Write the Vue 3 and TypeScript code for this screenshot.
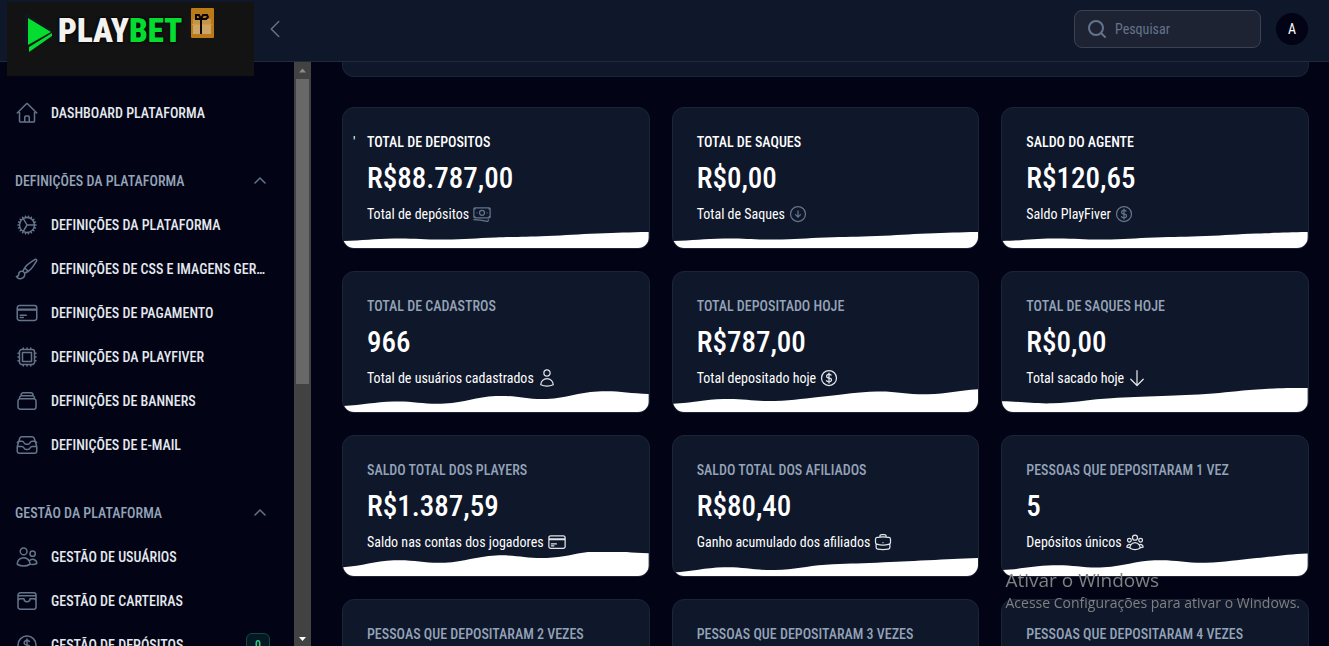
<script setup lang="ts">
type IconName =
  | 'home' | 'cog' | 'brush' | 'card' | 'chip' | 'stack' | 'inbox' | 'users' | 'wallet'
  | 'dollar' | 'banknotes' | 'downCircle' | 'user' | 'arrowDown' | 'briefcase' | 'group'

interface NavItem { label: string; icon: IconName; badge?: string }
interface NavGroup { title?: string; items: NavItem[] }
interface Stat {
  label: string
  value: string
  note: string
  icon: IconName
  chart: number[]
  top?: boolean
  mark?: string
}

const icons: Record<IconName, string> = {
  home: 'M2.25 12l8.954-8.955c.44-.439 1.152-.439 1.591 0L21.75 12M4.5 9.75v10.125c0 .621.504 1.125 1.125 1.125H9.75v-4.875c0-.621.504-1.125 1.125-1.125h2.25c.621 0 1.125.504 1.125 1.125V21h4.125c.621 0 1.125-.504 1.125-1.125V9.75M8.25 21h8.25',
  cog: 'M4.5 12a7.5 7.5 0 0 0 15 0m-15 0a7.5 7.5 0 1 1 15 0m-15 0H3m16.5 0H21m-1.5 0H12m-8.457 3.077 1.41-.513m14.095-5.13 1.41-.513M5.106 17.785l1.15-.964m11.49-9.642 1.149-.964M7.501 19.795l.75-1.3m7.5-12.99.75-1.3m-6.063 16.658.26-1.477m2.605-14.772.26-1.477m0 17.726-.26-1.477M10.698 4.614l-.26-1.477M16.5 19.794l-.75-1.299M7.5 4.205 12 12m6.894 5.785-1.149-.964M6.256 7.178l-1.15-.964m15.352 8.864-1.41-.513M4.954 9.435l-1.41-.514M12.002 12l-3.75 6.495',
  brush: 'M9.53 16.122a3 3 0 0 0-5.78 1.128 2.25 2.25 0 0 1-2.4 2.245 4.5 4.5 0 0 0 8.4-2.245c0-.399-.078-.78-.22-1.128Zm0 0a15.998 15.998 0 0 0 3.388-1.62m-5.043-.025a15.994 15.994 0 0 1 1.622-3.395m3.42 3.42a15.995 15.995 0 0 0 4.764-4.648l3.876-5.814a1.151 1.151 0 0 0-1.597-1.597L14.146 6.32a15.996 15.996 0 0 0-4.649 4.763m3.42 3.42a6.776 6.776 0 0 0-3.42-3.42',
  card: 'M2.25 8.25h19.5M2.25 9h19.5m-16.5 5.25h6m-6 2.25h3m-3.75 3h15a2.25 2.25 0 0 0 2.25-2.25V6.75A2.25 2.25 0 0 0 19.5 4.5h-15a2.25 2.25 0 0 0-2.25 2.25v10.5A2.25 2.25 0 0 0 4.5 19.5Z',
  chip: 'M8.25 3v1.5M4.5 8.25H3m18 0h-1.5M4.5 12H3m18 0h-1.5m-15 3.75H3m18 0h-1.5M8.25 19.5V21M12 3v1.5m0 15V21m3.75-18v1.5m0 15V21m-9-1.5h10.5a2.25 2.25 0 0 0 2.25-2.25V6.75a2.25 2.25 0 0 0-2.25-2.25H6.75A2.25 2.25 0 0 0 4.5 6.75v10.5a2.25 2.25 0 0 0 2.25 2.25Zm.75-12h9v9h-9v-9Z',
  stack: 'M6 6.878V6a2.25 2.25 0 0 1 2.25-2.25h7.5A2.25 2.25 0 0 1 18 6v.878m-12 0c.235-.083.487-.128.75-.128h10.5c.263 0 .515.045.75.128m-12 0A2.25 2.25 0 0 0 4.5 9v.878m13.5-3A2.25 2.25 0 0 1 19.5 9v.878m0 0a2.246 2.246 0 0 0-.75-.128H5.25c-.263 0-.515.045-.75.128m15 0A2.25 2.25 0 0 1 21 12v6a2.25 2.25 0 0 1-2.25 2.25H5.25A2.25 2.25 0 0 1 3 18v-6c0-.98.626-1.813 1.5-2.122',
  inbox: 'M9 3.75H6.912a2.25 2.25 0 0 0-2.15 1.588L2.35 13.177a2.25 2.25 0 0 0-.1.661V18a2.25 2.25 0 0 0 2.25 2.25h15A2.25 2.25 0 0 0 21.75 18v-4.162c0-.224-.034-.447-.1-.661L19.24 5.338a2.25 2.25 0 0 0-2.15-1.588H9M2.3 9.5c.5-.9 1.2-1.25 2.2-1.25h2.36a2.25 2.25 0 0 1 2.012 1.244l.256.512a2.25 2.25 0 0 0 2.013 1.244h1.718a2.25 2.25 0 0 0 2.013-1.244l.256-.512a2.25 2.25 0 0 1 2.013-1.244H19.5c1 0 1.7.35 2.2 1.25M2.3 13.5h4.56c.85 0 1.6.48 2.012 1.244l.256.512c.38.76 1.16 1.244 2.013 1.244h1.718c.85 0 1.63-.48 2.013-1.244l.256-.512c.38-.76 1.16-1.244 2.013-1.244h4.56',
  users: 'M15 19.128a9.38 9.38 0 0 0 2.625.372 9.337 9.337 0 0 0 4.121-.952 4.125 4.125 0 0 0-7.533-2.493M15 19.128v-.003c0-1.113-.285-2.16-.786-3.07M15 19.128v.106A12.318 12.318 0 0 1 8.624 21c-2.331 0-4.512-.645-6.374-1.766l-.001-.109a6.375 6.375 0 0 1 11.964-3.07M12 6.375a3.375 3.375 0 1 1-6.75 0 3.375 3.375 0 0 1 6.75 0Zm8.25 2.25a2.625 2.625 0 1 1-5.25 0 2.625 2.625 0 0 1 5.25 0Z',
  wallet: 'M21 8.25v9.75A2.25 2.25 0 0 1 18.75 20.25H5.25A2.25 2.25 0 0 1 3 18V6a2.25 2.25 0 0 1 2.25-2.25h13.5A2.25 2.25 0 0 1 21 6v6M3 6.75h18M3 12a2.25 2.25 0 0 1 2.25-2.25H9a3 3 0 1 0 6 0h3.75A2.25 2.25 0 0 1 21 12',
  dollar: 'M12 6v12m-3-2.818.879.659c1.171.879 3.07.879 4.242 0 1.172-.879 1.172-2.303 0-3.182C13.536 12.219 12.768 12 12 12c-.725 0-1.45-.22-2.003-.659-1.106-.879-1.106-2.303 0-3.182s2.9-.879 4.006 0l.415.33M21 12a9 9 0 1 1-18 0 9 9 0 0 1 18 0Z',
  banknotes: 'M2.25 18.75a60.07 60.07 0 0 1 15.797 2.101c.727.198 1.453-.342 1.453-1.096V18.75M3.75 4.5v.75A.75.75 0 0 1 3 6h-.75m0 0v-.375c0-.621.504-1.125 1.125-1.125H20.25M2.25 6v9m18-10.5v.75c0 .414.336.75.75.75h.75m-1.5-1.5h.375c.621 0 1.125.504 1.125 1.125v9.75c0 .621-.504 1.125-1.125 1.125h-.375m1.5-1.5H21a.75.75 0 0 0-.75.75v.75m0 0H3.75m0 0h-.375a1.125 1.125 0 0 1-1.125-1.125V15m1.5 1.5v-.75A.75.75 0 0 0 3 15h-.75M15 10.5a3 3 0 1 1-6 0 3 3 0 0 1 6 0Zm3 0h.008v.008H18V10.5Zm-12 0h.008v.008H6V10.5Z',
  downCircle: 'm9 12.75 3 3m0 0 3-3m-3 3v-7.5M21 12a9 9 0 1 1-18 0 9 9 0 0 1 18 0Z',
  user: 'M15.75 6a3.75 3.75 0 1 1-7.5 0 3.75 3.75 0 0 1 7.5 0ZM4.501 20.118a7.5 7.5 0 0 1 14.998 0A17.933 17.933 0 0 1 12 21.75c-2.676 0-5.216-.584-7.499-1.632Z',
  arrowDown: 'M19.5 13.5 12 21m0 0-7.5-7.5M12 21V3',
  briefcase: 'M20.25 14.15v4.25c0 1.094-.787 2.036-1.872 2.18-2.087.277-4.216.42-6.378.42s-4.291-.143-6.378-.42c-1.085-.144-1.872-1.086-1.872-2.18v-4.25m16.5 0a2.18 2.18 0 0 0 .75-1.661V8.706c0-1.081-.768-2.015-1.837-2.175a48.114 48.114 0 0 0-3.413-.387m4.5 8.006c-.194.165-.42.295-.673.38A23.978 23.978 0 0 1 12 15.75c-2.648 0-5.195-.429-7.577-1.22a2.016 2.016 0 0 1-.673-.38m0 0A2.18 2.18 0 0 1 3 12.489V8.706c0-1.081.768-2.015 1.837-2.175a48.111 48.111 0 0 1 3.413-.387m7.5 0V5.25A2.25 2.25 0 0 0 13.5 3h-3a2.25 2.25 0 0 0-2.25 2.25v.894m7.5 0a48.667 48.667 0 0 0-7.5 0M12 12.75h.008v.008H12v-.008Z',
  group: 'M18 18.72a9.094 9.094 0 0 0 3.741-.479 3 3 0 0 0-4.682-2.72m.94 3.198.001.031c0 .225-.012.447-.037.666A11.944 11.944 0 0 1 12 21c-2.17 0-4.207-.576-5.963-1.584A6.062 6.062 0 0 1 6 18.719m12 0a5.971 5.971 0 0 0-.941-3.197m0 0A5.995 5.995 0 0 0 12 12.75a5.995 5.995 0 0 0-5.058 2.772m0 0a3 3 0 0 0-4.681 2.72 8.986 8.986 0 0 0 3.74.477m.94-3.197a5.971 5.971 0 0 0-.94 3.197M15 6.75a3 3 0 1 1-6 0 3 3 0 0 1 6 0Zm6 3a2.25 2.25 0 1 1-4.5 0 2.25 2.25 0 0 1 4.5 0Zm-13.5 0a2.25 2.25 0 1 1-4.5 0 2.25 2.25 0 0 1 4.5 0Z'
}

const groups: NavGroup[] = [
  { items: [{ label: 'DASHBOARD PLATAFORMA', icon: 'home' }] },
  {
    title: 'DEFINIÇÕES DA PLATAFORMA',
    items: [
      { label: 'DEFINIÇÕES DA PLATAFORMA', icon: 'cog' },
      { label: 'DEFINIÇÕES DE CSS E IMAGENS GERAIS', icon: 'brush' },
      { label: 'DEFINIÇÕES DE PAGAMENTO', icon: 'card' },
      { label: 'DEFINIÇÕES DA PLAYFIVER', icon: 'chip' },
      { label: 'DEFINIÇÕES DE BANNERS', icon: 'stack' },
      { label: 'DEFINIÇÕES DE E-MAIL', icon: 'inbox' }
    ]
  },
  {
    title: 'GESTÃO DA PLATAFORMA',
    items: [
      { label: 'GESTÃO DE USUÁRIOS', icon: 'users' },
      { label: 'GESTÃO DE CARTEIRAS', icon: 'wallet' },
      { label: 'GESTÃO DE DEPÓSITOS', icon: 'dollar', badge: '0' }
    ]
  }
]

const calm = [7, 9.5, 8.5, 10.5, 12, 14.5, 16]
const stats: Stat[] = [
  { label: 'TOTAL DE DEPOSITOS', value: 'R$88.787,00', note: 'Total de depósitos', icon: 'banknotes', chart: calm, top: true, mark: "'" },
  { label: 'TOTAL DE SAQUES', value: 'R$0,00', note: 'Total de Saques', icon: 'downCircle', chart: calm, top: true },
  { label: 'SALDO DO AGENTE', value: 'R$120,65', note: 'Saldo PlayFiver', icon: 'dollar', chart: calm, top: true },
  { label: 'TOTAL DE CADASTROS', value: '966', note: 'Total de usuários cadastrados', icon: 'user', chart: [6, 10.5, 8.5, 16, 13, 20.5, 18] },
  { label: 'TOTAL DEPOSITADO HOJE', value: 'R$787,00', note: 'Total depositado hoje', icon: 'dollar', chart: [8.3, 13, 11, 15.7, 20.5, 17.7, 22.7] },
  { label: 'TOTAL DE SAQUES HOJE', value: 'R$0,00', note: 'Total sacado hoje', icon: 'arrowDown', chart: [10.7, 8.7, 13.3, 15.7, 18, 22.5, 24.5] },
  { label: 'SALDO TOTAL DOS PLAYERS', value: 'R$1.387,59', note: 'Saldo nas contas dos jogadores', icon: 'card', chart: [8.7, 15.7, 13.3, 20.5, 18, 24.8, 22.7] },
  { label: 'SALDO TOTAL DOS AFILIADOS', value: 'R$80,40', note: 'Ganho acumulado dos afiliados', icon: 'briefcase', chart: [3.5, 8.7, 6, 11.3, 13.3, 15.7, 18] },
  { label: 'PESSOAS QUE DEPOSITARAM 1 VEZ', value: '5', note: 'Depósitos únicos', icon: 'group', chart: [6, 10.7, 8.7, 15.7, 13.3, 18, 22.5] },
  { label: 'PESSOAS QUE DEPOSITARAM 2 VEZES', value: '0', note: 'Dois depósitos', icon: 'group', chart: calm },
  { label: 'PESSOAS QUE DEPOSITARAM 3 VEZES', value: '0', note: 'Três depósitos', icon: 'group', chart: calm },
  { label: 'PESSOAS QUE DEPOSITARAM 4 VEZES', value: '0', note: 'Quatro depósitos', icon: 'group', chart: calm }
]

// Smooth filled sparkline through evenly spaced heights, in a 60x24 box.
function wave(points: number[]): string {
  const at = (i: number) => 24 - points[Math.min(Math.max(i, 0), points.length - 1)]
  let d = `M0 24V${at(0)}`
  for (let i = 0; i < points.length - 1; i++) {
    const x = i * 10
    const c1 = at(i) + (at(i + 1) - at(i - 1)) / 5
    const c2 = at(i + 1) - (at(i + 2) - at(i)) / 5
    d += `C${x + 4} ${c1} ${x + 6} ${c2} ${x + 10} ${at(i + 1)}`
  }
  return d + 'V24Z'
}
</script>

<template>
  <div class="page">
    <header class="topbar">
      <a class="brand" href="#" aria-label="Playbet">
        <svg class="play" viewBox="0 0 28 40" aria-hidden="true">
          <path d="M1 1v30M1 1l25 17" fill="none" stroke="#0b1c3c" />
          <path d="M3 5 26 19 3 32Z" fill="#04dc30" />
          <path d="M27 20v3L4 39v-5Z" fill="#04dc30" />
        </svg>
        <span class="wordmark">PLAY<b>BET</b></span>
        <svg class="gift" viewBox="0 0 23 30" aria-hidden="true">
          <rect width="23" height="30" rx="1" fill="#b97a17" />
          <path d="M2 16h18v10H2z" fill="#cda568" />
          <path d="M2 11h18v5H2z" fill="#c29450" />
          <path d="M1 16.500h20" stroke="#df9b27" />
          <path d="M10 11v15" stroke="#080604" stroke-width="2" />
          <path d="M10 11H5V7h3l2 4Zm0 0 2-4h4l1 2-2 2Z" fill="none" stroke="#080604" stroke-width="2" />
        </svg>
      </a>
      <button class="collapse" type="button" aria-label="Recolher menu">
        <svg viewBox="0 0 24 24" class="line"><path d="M15.750 19.500 8.250 12l7.500-7.500" /></svg>
      </button>
      <label class="search">
        <svg viewBox="0 0 20 20" aria-hidden="true"><circle cx="9" cy="9" r="7" /><path d="m14 14 4 4" /></svg>
        <input type="search" placeholder="Pesquisar" aria-label="Pesquisar" />
      </label>
      <button class="avatar" type="button" aria-label="Menu do usuário">A</button>
    </header>

    <div class="body">
      <aside class="sidebar">
        <nav class="nav">
          <section v-for="(group, g) in groups" :key="g" class="group">
            <button v-if="group.title" class="group-title" type="button" aria-expanded="true">
              <span>{{ group.title }}</span>
              <svg viewBox="0 0 20 20" aria-hidden="true"><path d="m5 12 5-5 5 5" /></svg>
            </button>
            <a v-for="item in group.items" :key="item.label" class="item" href="#">
              <svg viewBox="0 0 24 24" class="line" aria-hidden="true"><path :d="icons[item.icon]" /></svg>
              <span class="item-label">{{ item.label }}</span>
              <span v-if="item.badge" class="badge">{{ item.badge }}</span>
            </a>
          </section>
        </nav>
        <div class="scrollbar" aria-hidden="true">
          <svg viewBox="0 0 17 17"><path d="M5 10.500h7L8.500 6.500Z" fill="#8b8b8b" /></svg>
          <div class="track"><div class="thumb"></div></div>
          <svg viewBox="0 0 17 17"><path d="M5 8h7l-3.500 4Z" fill="#fff" /></svg>
        </div>
      </aside>

      <main class="main">
        <div class="filters"></div>
        <div class="grid">
          <article v-for="stat in stats" :key="stat.label" class="stat" :class="{ top: stat.top }">
            <span v-if="stat.mark" class="mark">{{ stat.mark }}</span>
            <h3>{{ stat.label }}</h3>
            <p class="value">{{ stat.value }}</p>
            <p class="note">
              <span>{{ stat.note }}</span>
              <svg viewBox="0 0 24 24" class="line" aria-hidden="true"><path :d="icons[stat.icon]" /></svg>
            </p>
            <svg class="wave" viewBox="0 0 60 24" preserveAspectRatio="none" aria-hidden="true">
              <path :d="wave(stat.chart)" fill="#fff" />
            </svg>
          </article>
        </div>
      </main>
    </div>

    <div class="activation">
      <strong>Ativar o Windows</strong>
      <span>Acesse Configurações para ativar o Windows.</span>
    </div>
  </div>
</template>

<style>
body {
  margin: 0;
  background: #020415;
  overflow: hidden;
}
</style>

<style scoped>
.page {
  height: 100vh;
  display: flex;
  flex-direction: column;
  overflow: hidden;
  background: #020415;
  color: #fff;
  font-family: "Roboto Condensed", "Liberation Sans Narrow", Roboto, sans-serif;
  font-size: 14px;
  line-height: 20px;
}
.page * { box-sizing: border-box; }
button { font: inherit; color: inherit; background: none; border: 0; padding: 0; cursor: pointer; }
a { color: inherit; text-decoration: none; }
.line { fill: none; stroke: currentColor; stroke-width: 1.5; stroke-linecap: round; stroke-linejoin: round; }

.topbar {
  position: relative;
  z-index: 2;
  flex: none;
  height: 62px;
  display: flex;
  align-items: center;
  padding: 0 21px 4px 7px;
  background: #0f172a;
  border-bottom: 1px solid #222a3a;
}
.brand {
  align-self: flex-start;
  flex: none;
  display: flex;
  align-items: flex-start;
  width: 247px;
  height: 74px;
  margin-top: 2px;
  padding: 6px 0 0 18px;
  background: #131313;
}
.play { width: 28px; height: 40px; margin-top: 5px; }
.wordmark {
  width: 138px;
  padding-left: 5px;
  font-size: 33px;
  line-height: 46px;
  font-weight: 900;
  color: #f4f2ee;
  text-shadow: 0 0 2px #000, 0 0 3px #000;
}
.wordmark b { color: #04dc30; font-weight: 900; }
.gift { width: 23px; height: 30px; }
.collapse { display: flex; margin: 0 auto 0 9px; color: #64748b; }
.collapse svg { width: 24px; height: 24px; }
.search {
  display: flex;
  align-items: center;
  gap: 8px;
  width: 187px;
  height: 38px;
  padding: 0 12px;
  border: 1px solid #3b4252;
  border-radius: 8px;
  background: #1e2334;
}
.search svg { flex: none; width: 20px; height: 20px; fill: none; stroke: #64748b; stroke-width: 2; stroke-linecap: round; }
.search input {
  min-width: 0;
  width: 100%;
  border: 0;
  outline: 0;
  padding: 0;
  background: none;
  color: #fff;
  font: inherit;
}
.search input::placeholder { color: #64748b; opacity: 1; }
.avatar { width: 32px; height: 32px; margin-left: 15px; border-radius: 50%; background: #020415; text-align: center; }

.body { flex: 1; min-height: 0; display: flex; }
.sidebar { flex: none; display: flex; width: 311px; min-height: 0; }
.nav {
  flex: 1;
  min-width: 0;
  display: flex;
  flex-direction: column;
  gap: 24px;
  padding: 29px 24px 0 8px;
  overflow: hidden;
}
.group { flex: none; }
.group-title {
  display: flex;
  align-items: center;
  justify-content: space-between;
  width: 100%;
  height: 44px;
  padding: 0 0 0 7px;
  font-weight: 500;
  color: #94a3b8;
}
.group-title svg { width: 20px; height: 20px; fill: none; stroke: #64748b; stroke-width: 1.5; stroke-linecap: round; }
.item {
  display: flex;
  align-items: center;
  gap: 12px;
  height: 44px;
  padding: 0 0 0 7px;
  font-weight: 500;
  color: #e5e9f0;
}
.item svg { flex: none; width: 24px; height: 24px; color: #64748b; }
.item-label { flex: 1; min-width: 0; overflow: hidden; white-space: nowrap; text-overflow: ellipsis; }
.badge {
  width: 24px;
  height: 24px;
  border: 1px solid #0f4a45;
  border-radius: 6px;
  background: #051923;
  color: #34d399;
  font-size: 12px;
  line-height: 22px;
  text-align: center;
}
.scrollbar { flex: none; display: flex; flex-direction: column; width: 17px; background: #424242; }
.scrollbar svg { flex: none; width: 17px; height: 17px; }
.track { flex: 1; padding: 0 2px; }
.thumb { height: 55.5%; background: #686868; }

.main { flex: 1; min-width: 0; padding: 0 20px 0 31px; overflow: hidden; }
.filters {
  height: 15px;
  margin-bottom: 30px;
  border: 1px solid #1c2436;
  border-top: 0;
  border-radius: 0 0 12px 12px;
  background: #0f172a;
}
.grid { display: grid; grid-template-columns: repeat(3, minmax(0, 1fr)); gap: 22px; }
.stat {
  position: relative;
  display: flex;
  flex-direction: column;
  gap: 8px;
  padding: 24px;
  overflow: hidden;
  border: 1px solid #1c2436;
  border-radius: 12px;
  background: #0f172a;
}
.stat h3 { margin: 0; font-size: 14px; line-height: 20px; font-weight: 500; color: #94a3b8; }
.stat.top h3 { color: #fff; }
.stat p { margin: 0; white-space: nowrap; }
.stat .value { font-size: 29px; line-height: 36px; font-weight: 500; }
.note { display: flex; align-items: center; gap: 3px; }
.note svg { flex: none; width: 20px; height: 20px; color: #e2e5ea; }
.top .note svg { color: #64748b; }
.wave { position: absolute; left: 0; bottom: 0; width: 100%; height: 24px; }
.mark { position: absolute; left: 10px; top: 24px; }

.activation {
  position: fixed;
  right: 29px;
  bottom: 33px;
  z-index: 3;
  display: flex;
  flex-direction: column;
  color: #808080;
  font-family: "Open Sans", "Noto Sans", sans-serif;
  font-size: 14px;
  line-height: 20px;
  white-space: nowrap;
  pointer-events: none;
}
.activation strong { font-size: 19px; line-height: 26px; font-weight: 400; }
</style>
